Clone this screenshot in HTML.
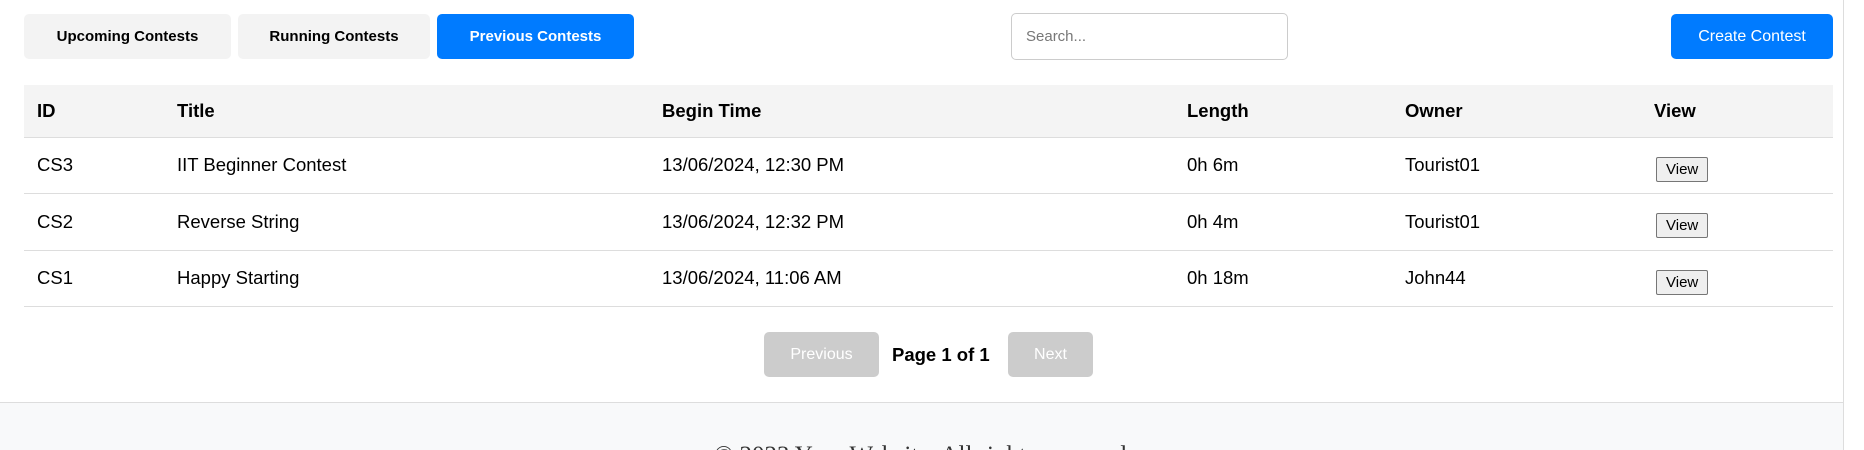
<!DOCTYPE html>
<html><head><style>
*{box-sizing:border-box;margin:0;padding:0}
body{width:1864px;height:450px;overflow:hidden;background:#fff;font-family:"Liberation Sans",Arial,sans-serif;position:relative}
.tab{position:absolute;top:14px;height:45px;border-radius:5px;background:#f3f3f3;font-weight:bold;font-size:15px;display:flex;align-items:center;justify-content:center;color:#000}
.blue{background:#007bff;color:#fff}
.search{position:absolute;left:1011px;top:13px;width:277px;height:47px;border:1px solid #ccc;border-radius:5px;font-size:15px;color:#777;padding:14px 14px}
table{position:absolute;left:24px;top:85px;width:1809px;border-collapse:collapse;font-size:18.5px}
th{background:#f4f4f4;text-align:left;height:52px;font-weight:bold;padding-left:13px}
td{height:56.5px;padding-left:13px;border-top:1px solid #ddd;border-bottom:1px solid #ddd}
th{border-bottom:1px solid #ddd}
.vb{display:inline-block;font-size:15px;border:1px solid #767676;background:#efefef;border-radius:2px;padding:2px 9px;line-height:19px;position:relative;top:4px;left:2px}
.pg{position:absolute;top:332px;height:45px;background:#ccc;color:#fff;border-radius:5px;font-size:16px;display:flex;align-items:center;justify-content:center}
footer{position:absolute;left:0;top:402px;width:1847px;height:48px;background:#f8f9fa;border-top:1px solid #ddd;overflow:hidden}
</style></head><body>
<div class="tab" style="left:24px;width:207px">Upcoming Contests</div>
<div class="tab" style="left:238px;width:192px">Running Contests</div>
<div class="tab blue" style="left:437px;width:197px">Previous Contests</div>
<div class="search">Search...</div>
<div class="tab blue" style="left:1671px;width:162px;font-weight:normal;font-size:16px">Create Contest</div>
<table>
<colgroup><col style="width:140px"><col style="width:485px"><col style="width:525px"><col style="width:218px"><col style="width:249px"><col></colgroup>
<tr><th>ID</th><th>Title</th><th>Begin Time</th><th>Length</th><th>Owner</th><th>View</th></tr>
<tr><td>CS3</td><td>IIT Beginner Contest</td><td>13/06/2024, 12:30 PM</td><td>0h 6m</td><td>Tourist01</td><td><span class="vb">View</span></td></tr>
<tr><td>CS2</td><td>Reverse String</td><td>13/06/2024, 12:32 PM</td><td>0h 4m</td><td>Tourist01</td><td><span class="vb">View</span></td></tr>
<tr><td>CS1</td><td>Happy Starting</td><td>13/06/2024, 11:06 AM</td><td>0h 18m</td><td>John44</td><td><span class="vb">View</span></td></tr>
</table>
<div class="pg" style="left:764px;width:115px">Previous</div>
<div style="position:absolute;left:892px;top:344px;font-size:18.5px;font-weight:bold">Page 1 of 1</div>
<div class="pg" style="left:1008px;width:85px">Next</div>
<footer><div style="position:absolute;left:0;width:100%;top:38px;text-align:center;font-family:'Liberation Serif',serif;font-size:25px;color:#333;line-height:30px">© 2023 Your Website. All rights reserved.</div></footer>
<div style="position:absolute;left:1843px;top:0;width:21px;height:450px;background:#fff;border-left:1px solid #ddd"></div>
</body></html>
